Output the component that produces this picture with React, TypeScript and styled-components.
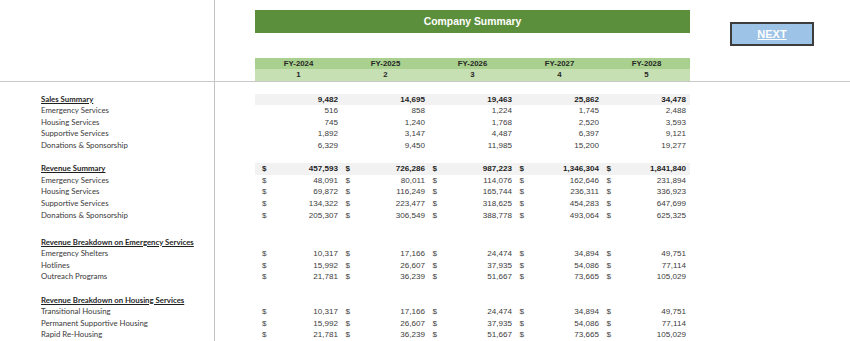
import React from "react";
import styled, { createGlobalStyle } from "styled-components";

const GlobalStyle = createGlobalStyle`
  html, body { margin: 0; padding: 0; background: #ffffff; }
  body { width: 850px; height: 341px; overflow: hidden; font-family: "Liberation Sans", Arial, sans-serif; }
`;

const COLS = "215px 40px repeat(5, 87px) 1fr";
const ROW_H = 11.6;

const Page = styled.div`
  width: 850px;
  height: 341px;
  overflow: hidden;
  display: flex;
  flex-direction: column;
`;

const Top = styled.div`
  display: grid;
  grid-template-columns: ${COLS};
  height: 81px;
  border-bottom: 1px solid #c9c9c9;
`;

const LeftCell = styled.div`
  border-right: 1px solid #c3c3c3;
`;

const HeaderBlock = styled.div`
  grid-column: 3 / span 5;
  display: flex;
  flex-direction: column;
  padding-top: 10px;
`;

const TitleBar = styled.div`
  height: 23px;
  background: #5b8f3b;
  color: #ffffff;
  font-weight: 700;
  font-size: 10.4px;
  display: flex;
  align-items: center;
  justify-content: center;
  margin-bottom: 24.5px;
`;

const HeadRow = styled.div<{ $tone: "dark" | "light"; $h: number }>`
  display: grid;
  grid-template-columns: repeat(5, 87px);
  height: ${(p) => p.$h}px;
  background: ${(p) => (p.$tone === "dark" ? "#a9d08e" : "#c6e0b4")};
`;

const HeadCell = styled.div`
  font-size: 7.8px;
  font-weight: 700;
  color: #262626;
  display: flex;
  align-items: center;
  justify-content: center;
`;

const ButtonArea = styled.div`
  padding: 22px 0 0 40px;
`;

const NextButton = styled.div`
  box-sizing: border-box;
  width: 84px;
  height: 24px;
  background: #9dc3e6;
  border: 2px solid #3d3d3d;
  color: #ffffff;
  font-weight: 700;
  font-size: 11px;
  text-decoration: underline;
  display: flex;
  align-items: center;
  justify-content: center;
`;

const Body = styled.div`
  display: flex;
  flex-direction: column;
  flex: 1;
`;

const Row = styled.div<{ $h?: number }>`
  display: grid;
  grid-template-columns: ${COLS};
  height: ${(p) => p.$h ?? ROW_H}px;
  line-height: ${(p) => p.$h ?? ROW_H}px;
`;

const Filler = styled.div`
  display: grid;
  grid-template-columns: ${COLS};
  flex: 1;
`;

const Label = styled.div<{ $head?: boolean }>`
  border-right: 1px solid #c3c3c3;
  padding-left: 41px;
  font-family: Lato, "Liberation Sans", sans-serif;
  font-size: 7.8px;
  white-space: nowrap;
  color: ${(p) => (p.$head ? "#1f1f1f" : "#3a3a3a")};
  font-weight: ${(p) => (p.$head ? 700 : 400)};
  text-decoration: ${(p) => (p.$head ? "underline" : "none")};
`;

const Value = styled.div<{ $band?: boolean; $bold?: boolean; $first?: boolean; $dollar?: boolean }>`
  display: flex;
  justify-content: ${(p) => (p.$dollar ? "space-between" : "flex-end")};
  padding: 0 4px 0 ${(p) => (p.$first ? 7 : 3.5)}px;
  font-size: 8.1px;
  white-space: nowrap;
  color: ${(p) => (p.$bold ? "#1f1f1f" : "#404040")};
  font-weight: ${(p) => (p.$bold ? 700 : 400)};
  background: ${(p) => (p.$band ? "#f2f2f2" : "transparent")};
  &:nth-child(2) { grid-column: 3; }
`;

const fmt = (n: number) => n.toLocaleString("en-US");

type Line = { label: string; values?: number[]; head?: boolean };

function DataRow({ line, dollar }: { line: Line; dollar: boolean }) {
  const isSummary = !!line.head && !!line.values;
  return (
    <Row>
      <Label $head={line.head}>{line.label}</Label>
      {line.values
        ? line.values.map((v, i) => (
            <Value key={i} $band={isSummary} $bold={isSummary} $first={i === 0} $dollar={dollar}>
              {dollar && <span>$</span>}
              <span>{fmt(v)}</span>
            </Value>
          ))
        : null}
    </Row>
  );
}

function Section({ lines, dollar }: { lines: Line[]; dollar: boolean }) {
  return (
    <>
      {lines.map((l, i) => (
        <DataRow key={i} line={l} dollar={dollar} />
      ))}
    </>
  );
}

function Blank({ h }: { h?: number }) {
  return (
    <Row $h={h}>
      <Label />
    </Row>
  );
}

const sales: Line[] = [
  { label: "Sales Summary", head: true, values: [9482, 14695, 19463, 25862, 34478] },
  { label: "Emergency Services", values: [516, 858, 1224, 1745, 2488] },
  { label: "Housing Services", values: [745, 1240, 1768, 2520, 3593] },
  { label: "Supportive Services", values: [1892, 3147, 4487, 6397, 9121] },
  { label: "Donations & Sponsorship", values: [6329, 9450, 11985, 15200, 19277] },
];

const revenue: Line[] = [
  { label: "Revenue Summary", head: true, values: [457593, 726286, 987223, 1346304, 1841840] },
  { label: "Emergency Services", values: [48091, 80011, 114076, 162646, 231894] },
  { label: "Housing Services", values: [69872, 116249, 165744, 236311, 336923] },
  { label: "Supportive Services", values: [134322, 223477, 318625, 454283, 647699] },
  { label: "Donations & Sponsorship", values: [205307, 306549, 388778, 493064, 625325] },
];

const a = [10317, 17166, 24474, 34894, 49751];
const b = [15992, 26607, 37935, 54086, 77114];
const c = [21781, 36239, 51667, 73665, 105029];

const emergency: Line[] = [
  { label: "Revenue Breakdown on Emergency Services", head: true },
  { label: "Emergency Shelters", values: a },
  { label: "Hotlines", values: b },
  { label: "Outreach Programs", values: c },
];

const housing: Line[] = [
  { label: "Revenue Breakdown on Housing Services", head: true },
  { label: "Transitional Housing", values: a },
  { label: "Permanent Supportive Housing", values: b },
  { label: "Rapid Re-Housing", values: c },
];

const years = ["FY-2024", "FY-2025", "FY-2026", "FY-2027", "FY-2028"];

export default function App() {
  return (
    <>
      <GlobalStyle />
      <Page>
        <Top>
          <LeftCell />
          <div />
          <HeaderBlock>
            <TitleBar>Company Summary</TitleBar>
            <HeadRow $tone="dark" $h={11}>
              {years.map((y) => (
                <HeadCell key={y}>{y}</HeadCell>
              ))}
            </HeadRow>
            <HeadRow $tone="light" $h={12.5}>
              {years.map((y, i) => (
                <HeadCell key={y}>{i + 1}</HeadCell>
              ))}
            </HeadRow>
          </HeaderBlock>
          <ButtonArea>
            <NextButton>NEXT</NextButton>
          </ButtonArea>
        </Top>
        <Body>
          <Blank />
          <Section lines={sales} dollar={false} />
          <Blank />
          <Section lines={revenue} dollar={true} />
          <Blank h={15.5} />
          <Section lines={emergency} dollar={true} />
          <Blank />
          <Section lines={housing} dollar={true} />
          <Filler>
            <Label />
          </Filler>
        </Body>
      </Page>
    </>
  );
}
